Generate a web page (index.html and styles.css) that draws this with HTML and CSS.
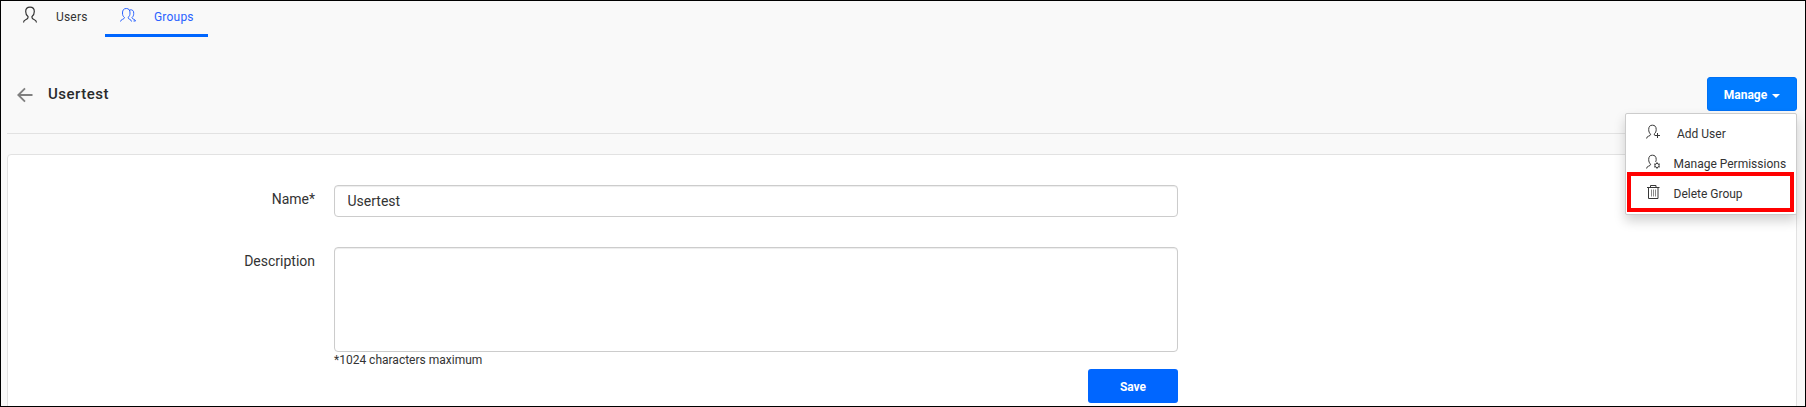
FILE: index.html
```
<!DOCTYPE html>
<html lang="en">
<head>
<meta charset="utf-8">
<title>Groups</title>
<link rel="stylesheet" href="styles.css">
</head>
<body>
<div class="page">
  <nav class="tabs">
    <a class="tab tab-users">
      <svg class="tab-icon" viewBox="0 0 16 18"><path d="M1.500 17.500C1.500 14 6 15 6 12.500V11.500C4.500 10.500 3.700 9 3.700 6.500C3.700 3.500 5 2.200 8 2.200S12.300 3.500 12.300 6.500c0 2.500-.8 4-2.300 5v1c0 2.500 4.500 1.500 4.500 5"/></svg>
      <span>Users</span>
    </a>
    <a class="tab tab-groups active">
      <svg class="tab-icon" viewBox="0 0 16 18"><path d="M.5 15.500c0-2.300 4-2 4-4C3 10.500 2.500 9 2.500 7c0-3 1.300-4.500 3.800-4.500S10 4 10 7c0 2-.5 3.500-2 4.500 0 2 3.500 1.700 3.500 4M9.500 4c3-.8 4.500 1 4.200 3.500 0 1.800-.5 3-1.700 4 0 2 3.500 1.700 3.500 3.500h-2"/></svg>
      <span>Groups</span>
    </a>
  </nav>
  <header class="heading">
    <svg class="back" viewBox="0 0 16 16"><path d="M15.500 8H1.500M8 1.300L1.300 8 8 14.700"/></svg>
    <h1>Usertest</h1>
    <div class="manage">
      <button class="button manage-button">Manage<i class="caret"></i></button>
      <div class="menu">
        <div class="menu-item">
          <svg class="menu-icon" viewBox="0 0 15 16"><path d="M.6 14.500c0-3 4-1.800 4-4.300C3.300 9 2.700 7.500 2.700 5.500 2.700 2.500 4 1.200 6.400 1.200s3.800 1.300 3.800 4.300c0 2-.7 3.500-2 4.500l.4 1.500M11.500 9v5M9 11.500h5"/></svg>
          <span class="add-label">Add User</span>
        </div>
        <div class="menu-item">
          <svg class="menu-icon" viewBox="0 0 15 16"><path d="M.6 14.500c0-3 4-1.800 4-4.300C3.300 9 2.700 7.500 2.700 5.500 2.700 2.500 4 1.200 6.400 1.200s3.800 1.300 3.800 4.300c0 1-.2 1.700-.6 2.400"/><circle class="gear" cx="11" cy="11.500" r="2.100"/><path class="gear" d="M11 8.200v1.300M11 13.500v1.300M8.100 9.900l1.100.6M12.800 12.500l1.100.6M8.100 13.100l1.100-.6M12.800 10.500l1.100-.6"/></svg>
          <span>Manage Permissions</span>
        </div>
        <div class="menu-item">
          <svg class="menu-icon" viewBox="0 0 15 16"><path d="M1 3.500h12.500M4.500 3V1.500h5.500V3M2.500 4v10.500h9.500V4"/><path class="slats" d="M5.500 5.500v7M7.500 5.500v7M9.500 5.500v7"/></svg>
          <span>Delete Group</span>
        </div>
        <div class="highlight"></div>
      </div>
    </div>
  </header>
  <main class="card">
    <form class="form">
      <label class="label" for="name">Name*</label>
      <input class="field name" id="name" value="Usertest">
      <label class="label" for="description">Description</label>
      <div class="description">
        <textarea class="field area" id="description"></textarea>
        <div class="hint">*1024 characters maximum</div>
        <button type="button" class="button save">Save</button>
      </div>
    </form>
  </main>
</div>
</body>
</html>
```
FILE: styles.css
```
* { box-sizing: border-box; }
body { margin: 0; font-family: Roboto, sans-serif; color: #333; }
.page { height: 407px; overflow: hidden; border: 1px solid #000; background: #f9f9f9; padding: 0 8px 0 6px; }
svg { fill: none; stroke: currentColor; flex: none; }
.tabs { display: flex; height: 36px; padding-left: 1px; font-size: 12px; letter-spacing: .2px; }
.tab { display: flex; align-items: flex-start; height: 36px; }
.tab-users { width: 97px; padding-left: 14px; }
.tab-groups { width: 103px; padding-left: 15px; color: #2962ff; border-bottom: 3px solid #0066ff; }
.tab-icon { width: 16px; height: 18px; margin-top: 4px; stroke-width: 1.200; }
.tab span { margin: 9px 0 0 18px; line-height: 14px; }
.tab-groups .tab-icon { margin-top: 5px; stroke-width: 1; }
.heading { display: flex; height: 97px; border-bottom: 1px solid #e2e2e2; padding: 40px 0 0 10px; }
.back { width: 16px; height: 16px; margin-top: 10px; stroke: #808080; stroke-width: 1.900; }
h1 { margin: 7px 0 0 15px; font-size: 15px; line-height: 20px; font-weight: 500; letter-spacing: .5px; color: #292b2c; }
.manage { position: relative; margin-left: auto; }
.button { width: 90px; height: 34px; border: 0; border-radius: 3px; color: #fff; background: #0066ff; font: 700 12px Roboto, sans-serif; padding: 0; }
.manage-button { display: flex; align-items: center; justify-content: center; padding-top: 2px; background: #007bff; border: 1px solid #0071f5; }
.caret { margin: 2px 0 0 5px; border: 4px solid transparent; border-top-color: #fff; border-bottom: 0; }
.menu { position: absolute; z-index: 1; right: 0; top: 36px; width: 172px; height: 102px; padding: 5px 0; background: #fff; border: 1px solid #ccc; border-radius: 2px; box-shadow: 0 6px 12px rgba(0,0,0,.18); font-size: 12px; white-space: nowrap; }
.menu-item { display: flex; height: 30px; padding-left: 20px; }
.menu-icon { width: 15px; height: 16px; margin-top: 5px; color: #383838; }
.gear { stroke-width: 1; }
.slats { stroke-width: .6; }
.menu-item span { margin: 8px 0 0 12.5px; line-height: 14px; }
.menu-item .add-label { margin-left: 16px; }
.highlight { position: absolute; left: 1px; top: 58px; width: 167px; height: 40px; border: 4px solid #f00; }
.card { height: 270px; margin-top: 20px; background: #fff; border: 1px solid #e2e2e2; border-radius: 4px; padding-top: 30px; }
.form { display: grid; grid-template-columns: 307px 844px; column-gap: 19px; row-gap: 30px; font-size: 14px; }
.label { text-align: right; line-height: 16px; padding-top: 6px; }
.field { display: block; width: 100%; border: 1px solid #ccc; border-radius: 4px; background: #fff; box-shadow: inset 0 1px 1px rgba(0,0,0,.075); outline: 0; resize: none; font: 14px Roboto, sans-serif; color: #333; }
.name { height: 32px; padding: 0 12.5px; }
.area { height: 105px; padding: 6px 12px; }
.hint { font-size: 12px; line-height: 17px; }
.save { display: block; margin-left: auto; padding-top: 1px; }
```
